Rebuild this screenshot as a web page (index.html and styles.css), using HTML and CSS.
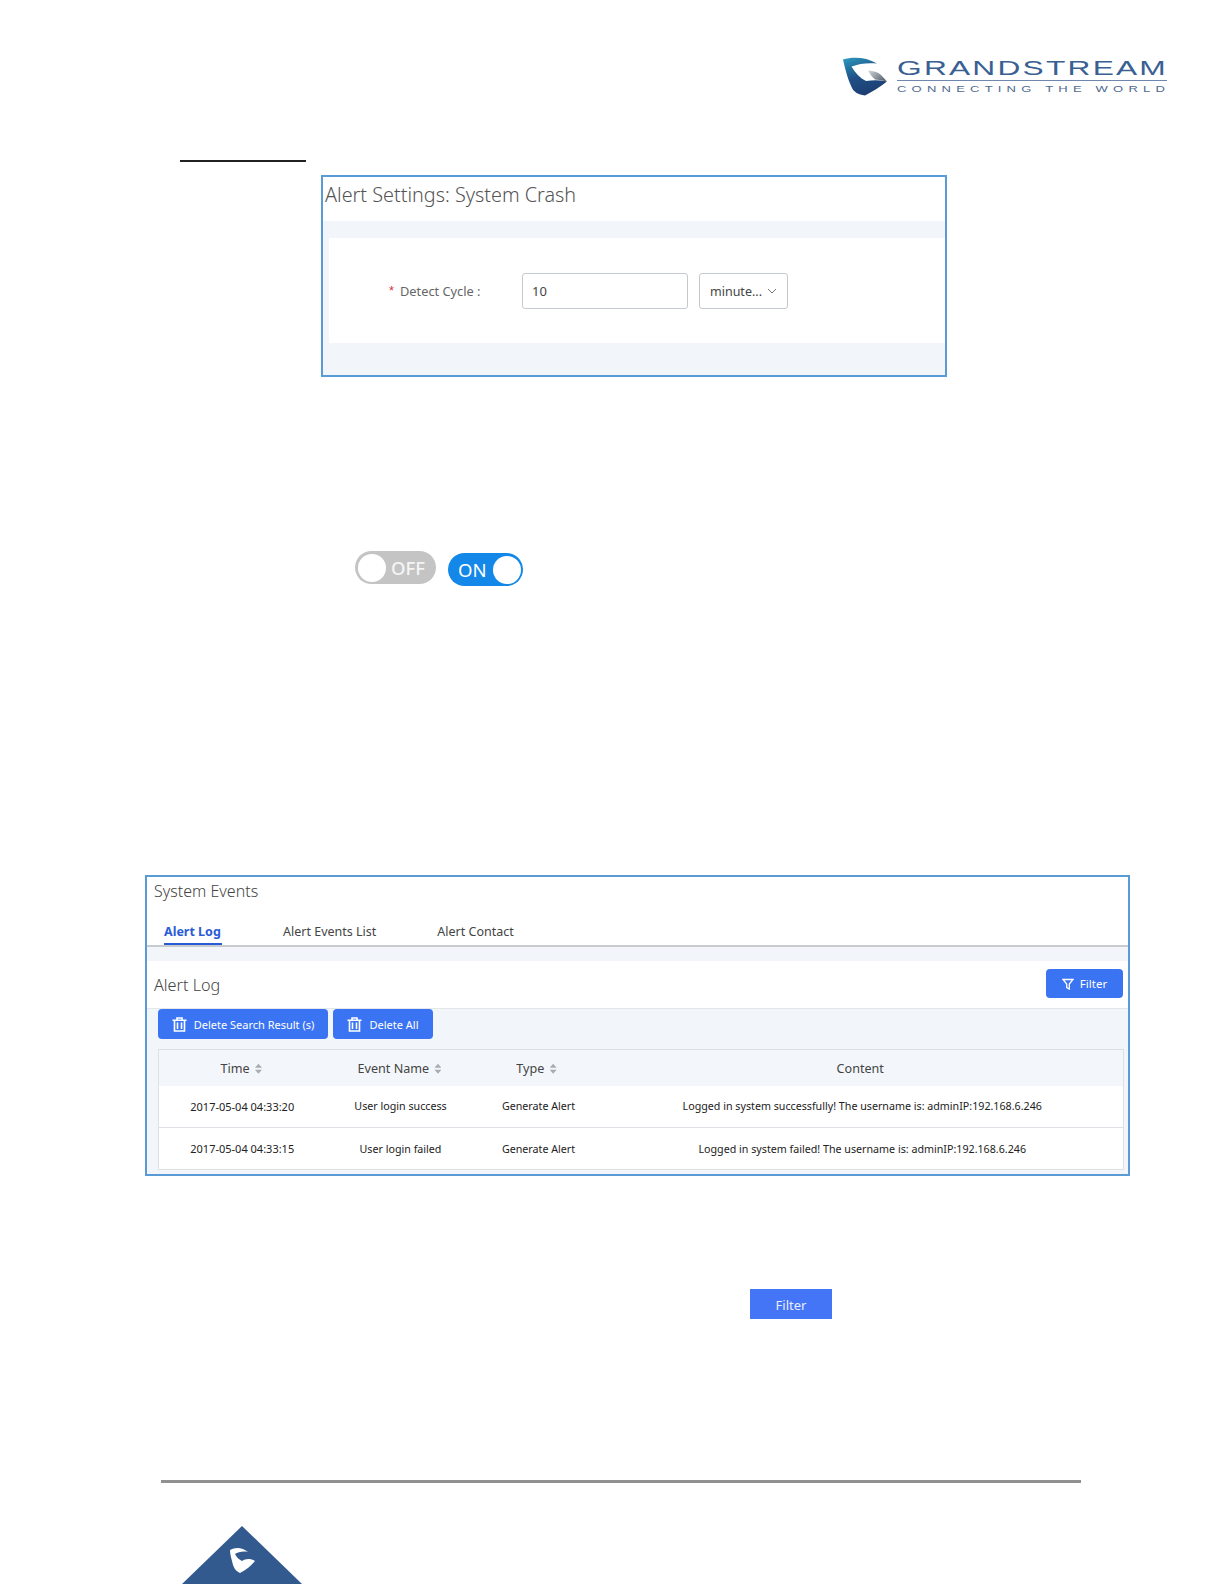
FILE: index.html
```html
<!DOCTYPE html>
<html lang="en">
<head>
  <meta charset="UTF-8">
  <title>Alert Settings</title>
  <link rel="stylesheet" href="styles.css">
</head>
<body>
  <div class="page">
    <div class="brand">
      <svg class="brand-mark" width="46" height="42" viewBox="0 0 46 42">
        <defs>
          <linearGradient id="markBlue" x1="0" y1="0" x2="0.45" y2="1">
            <stop offset="0" stop-color="#2f9cc0"/>
            <stop offset="0.3" stop-color="#23709f"/>
            <stop offset="0.55" stop-color="#1f4f86"/>
            <stop offset="1" stop-color="#1d3f73"/>
          </linearGradient>
          <linearGradient id="markGrey" x1="0" y1="0" x2="1" y2="0.6">
            <stop offset="0" stop-color="#d5d8dc"/>
            <stop offset="1" stop-color="#5c6672"/>
          </linearGradient>
        </defs>
        <path fill="url(#markBlue)" d="M1 3.5 C11 0.5 24 1 35 7.5 C26 6.5 17 7.5 9.5 10.5 C13 17 18 22 24 25 C31 24 38 24 45 25.5 C38 31 30 36 23 39.5 C16 38.5 12 36 10 32 C6 24 3 13 1 3.5 Z"/>
        <path fill="url(#markGrey)" d="M26 14.5 C31 15 36 16 39 19 L45 25.5 C41 24.5 37 24 33 23.5 C30 21 28 18 26 14.5 Z"/>
      </svg>
      <div class="brand-text">
        <div class="brand-name">GRANDSTREAM</div>
        <div class="brand-line"></div>
        <div class="brand-tag">CONNECTING THE WORLD</div>
      </div>
    </div>

    <div class="short-rule"></div>

    <div class="shot shot-settings">
      <div class="settings-title">Alert Settings: System Crash</div>
      <div class="settings-body">
        <div class="settings-card">
          <span class="req">*</span>
          <span class="field-label">Detect Cycle :</span>
          <div class="text-input">10</div>
          <div class="select-input">
            <span>minute...</span>
            <svg width="10" height="6" viewBox="0 0 10 6"><path d="M1 1 L5 5 L9 1" fill="none" stroke="#777" stroke-width="1"/></svg>
          </div>
        </div>
      </div>
    </div>

    <div class="toggles">
      <div class="toggle toggle-off"><span class="knob"></span><span class="toggle-text">OFF</span></div>
      <div class="toggle toggle-on"><span class="toggle-text">ON</span><span class="knob"></span></div>
    </div>

    <div class="shot shot-events">
      <div class="events-title">System Events</div>
      <div class="tabs">
        <div class="tab tab-active">Alert Log</div>
        <div class="tab tab-second">Alert Events List</div>
        <div class="tab tab-third">Alert Contact</div>
      </div>
      <div class="events-body">
        <div class="log-head">
          <div class="log-title">Alert Log</div>
          <div class="btn btn-filter">
            <svg width="12" height="12" viewBox="0 0 12 12"><path d="M1 1.5 H11 L7.3 6 V11 L4.7 9.5 V6 Z" fill="none" stroke="#fff" stroke-width="1.3"/></svg>
            Filter
          </div>
        </div>
        <div class="log-actions">
          <div class="btn btn-delete">
            <svg width="15" height="15" viewBox="0 0 15 15"><path d="M0.5 3.2 H14.5 M5 3 V1 H10 V3 M2.5 3.2 V14 H12.5 V3.2 M5.5 5.5 V12 M9.5 5.5 V12" fill="none" stroke="#fff" stroke-width="1.6"/></svg>
            Delete Search Result (s)
          </div>
          <div class="btn btn-delete btn-all">
            <svg width="15" height="15" viewBox="0 0 15 15"><path d="M0.5 3.2 H14.5 M5 3 V1 H10 V3 M2.5 3.2 V14 H12.5 V3.2 M5.5 5.5 V12 M9.5 5.5 V12" fill="none" stroke="#fff" stroke-width="1.6"/></svg>
            Delete All
          </div>
        </div>
        <table class="log-table">
          <colgroup>
            <col class="col-time"><col class="col-name"><col class="col-type"><col>
          </colgroup>
          <thead>
            <tr>
              <th>Time <i class="sort"></i></th>
              <th>Event Name <i class="sort"></i></th>
              <th>Type <i class="sort"></i></th>
              <th>Content</th>
            </tr>
          </thead>
          <tbody>
            <tr>
              <td>2017-05-04 04:33:20</td>
              <td>User login success</td>
              <td>Generate Alert</td>
              <td>Logged in system successfully! The username is: adminIP:192.168.6.246</td>
            </tr>
            <tr>
              <td>2017-05-04 04:33:15</td>
              <td>User login failed</td>
              <td>Generate Alert</td>
              <td>Logged in system failed! The username is: adminIP:192.168.6.246</td>
            </tr>
          </tbody>
        </table>
      </div>
    </div>

    <div class="plain-filter">Filter</div>

    <div class="footer-rule"></div>

    <svg class="footer-mark" width="120" height="58" viewBox="0 0 120 58">
      <path fill="#335a8f" d="M60 0 L120 58 H0 Z"/>
      <path fill="#fff" d="M48 24 C53 21 60 21 66 26 C61 25 56 26 53 28 C55 32 58 34 60 35 C63 33 68 32 73 35 C69 40 64 44 58 47 C53 45 51 40 50 35 C49 31 48 28 48 24 Z"/>
    </svg>
  </div>
</body>
</html>
```

FILE: styles.css
```css
* {
  margin: 0;
  padding: 0;
  box-sizing: border-box;
}

html, body {
  background: #fff;
}

.page {
  width: 1224px;
  height: 1584px;
  overflow: hidden;
  font-family: "Noto Sans", "Liberation Sans", sans-serif;
  color: #333;
}

/* logo */
.brand {
  display: flex;
  height: 42px;
  margin: 56px 0 0 842px;
}

.brand-text {
  width: 270px;
  margin-left: 9px;
  font-family: "Liberation Sans", sans-serif;
  color: #3a5f93;
}

.brand-name {
  height: 24px;
  padding-top: 1px;
  font-size: 20px;
  line-height: 23px;
  letter-spacing: 1.4px;
  white-space: nowrap;
  transform: scaleX(1.585);
  transform-origin: left;
}

.brand-line {
  height: 1px;
  background: #6d87ad;
}

.brand-tag {
  margin-top: 3px;
  font-size: 9.5px;
  line-height: 10px;
  letter-spacing: 3.8px;
  white-space: nowrap;
  color: #4f6b90;
  transform: scaleX(1.37);
  transform-origin: left;
}

.short-rule {
  width: 126px;
  height: 2px;
  margin: 62px 0 0 180px;
  background: #222;
}

.shot {
  border: 2px solid #5b9bd5;
  background: #fff;
}

/* first screenshot */
.shot-settings {
  width: 626px;
  height: 202px;
  margin: 13px 0 0 321px;
}

.settings-title {
  height: 44px;
  padding-left: 2px;
  font-size: 19.8px;
  font-weight: 300;
  line-height: 36px;
  color: #555;
}

.settings-body {
  height: 154px;
  padding: 17px 0 0 6px;
  background: #f2f5f9;
}

.settings-card {
  display: flex;
  align-items: center;
  height: 105px;
  padding-left: 60px;
  background: #fff;
  font-size: 12.8px;
  color: #666;
}

.req {
  width: 11px;
  color: #d9363e;
  font-family: "Liberation Sans", sans-serif;
}

.field-label {
  width: 122px;
}

.text-input {
  width: 166px;
  height: 36px;
  padding-left: 9px;
  border: 1px solid #c5c9d0;
  border-radius: 3px;
  font-size: 13px;
  line-height: 34px;
  color: #444;
}

.select-input {
  display: flex;
  align-items: center;
  gap: 5px;
  width: 89px;
  height: 36px;
  margin-left: 11px;
  padding: 1px 0 0 10px;
  border: 1px solid #c5c9d0;
  border-radius: 3px;
  font-size: 12.5px;
  color: #444;
}

/* on / off switches */
.toggles {
  display: flex;
  gap: 12px;
  margin: 174px 0 0 355px;
}

.toggle {
  display: flex;
  align-items: center;
  height: 33px;
  border-radius: 17px;
  color: #fff;
  font-size: 18.5px;
}

.toggle-off {
  width: 81px;
  padding: 0 11px 0 3px;
  justify-content: space-between;
  background: #c4c4c4;
  color: #f4f4f4;
  font-weight: 500;
}

.toggle-on {
  width: 75px;
  margin-top: 2px;
  padding: 0 2px 0 10px;
  justify-content: space-between;
  background: #1488e8;
}

.knob {
  width: 28px;
  height: 28px;
  border-radius: 50%;
  background: #fff;
}

/* second screenshot */
.shot-events {
  width: 985px;
  height: 301px;
  margin: 289px 0 0 145px;
}

.events-title {
  height: 40px;
  padding-left: 7px;
  font-size: 16px;
  font-weight: 300;
  line-height: 29px;
  color: #444;
}

.tabs {
  display: flex;
  height: 30px;
  padding: 3px 0 0 17px;
  border-bottom: 2px solid #c8cbd0;
  font-size: 12.5px;
  color: #444;
}

.tab {
  line-height: 24px;
  white-space: nowrap;
}

.tab-active {
  width: 58px;
  height: 25px;
  border-bottom: 2px solid #2a5bd7;
  color: #2a5bd7;
  font-weight: 700;
}

.tab-second {
  margin-left: 61px;
}

.tab-third {
  margin-left: 61px;
}

.events-body {
  height: 227px;
  padding-top: 14px;
  background: #f2f5f9;
}

.log-head {
  display: flex;
  justify-content: space-between;
  height: 48px;
  padding: 8px 5px 0 7px;
  background: #fff;
  border-bottom: 1px solid #e4e7ea;
}

.log-title {
  font-size: 16.2px;
  font-weight: 300;
  line-height: 33px;
  color: #444;
}

.btn {
  display: flex;
  align-items: center;
  justify-content: center;
  background: #3b74f2;
  border-radius: 4px;
  color: #fff;
  font-size: 11px;
}

.btn-filter {
  gap: 6px;
  width: 77px;
  height: 29px;
  font-size: 11.5px;
}

.log-actions {
  display: flex;
  gap: 5px;
  padding-left: 11px;
}

.btn-delete {
  gap: 7px;
  width: 170px;
  height: 30px;
}

.btn-all {
  width: 100px;
}

.log-table {
  width: 966px;
  margin: 10px 0 0 11px;
  border-collapse: collapse;
  table-layout: fixed;
  border: 1px solid #dde1e6;
  background: #fff;
}

.col-time {
  width: 169px;
}

.col-name {
  width: 148px;
}

.col-type {
  width: 126px;
}

.log-table th {
  height: 36px;
  padding: 1px 4px 0 0;
  background: #f3f6fa;
  font-size: 12.6px;
  font-weight: 400;
  color: #444;
}

.log-table td {
  height: 42px;
  border-top: 1px solid #dde1e6;
  font-size: 10.7px;
  text-align: center;
  color: #222;
}

.log-table td:first-child {
  padding-right: 2px;
  font-size: 11px;
}

.log-table td:nth-child(2) {
  padding-right: 2px;
}

.log-table tbody tr:first-child td {
  border-top: 0;
}

.sort {
  display: inline-block;
  width: 7px;
  height: 10px;
  margin-left: 2px;
  vertical-align: -1px;
  background: #a8adb3;
  clip-path: polygon(50% 0, 100% 40%, 0 40%, 0 60%, 100% 60%, 50% 100%, 0 60%, 0 40%);
}

.plain-filter {
  width: 82px;
  height: 30px;
  margin: 113px 0 0 750px;
  background: #4475f7;
  color: #e8eeff;
  font-size: 13px;
  line-height: 32px;
  text-align: center;
}

.footer-rule {
  width: 920px;
  height: 3px;
  margin: 161px 0 0 161px;
  background: #909090;
}

.footer-mark {
  display: block;
  margin: 43px 0 0 182px;
}
```
